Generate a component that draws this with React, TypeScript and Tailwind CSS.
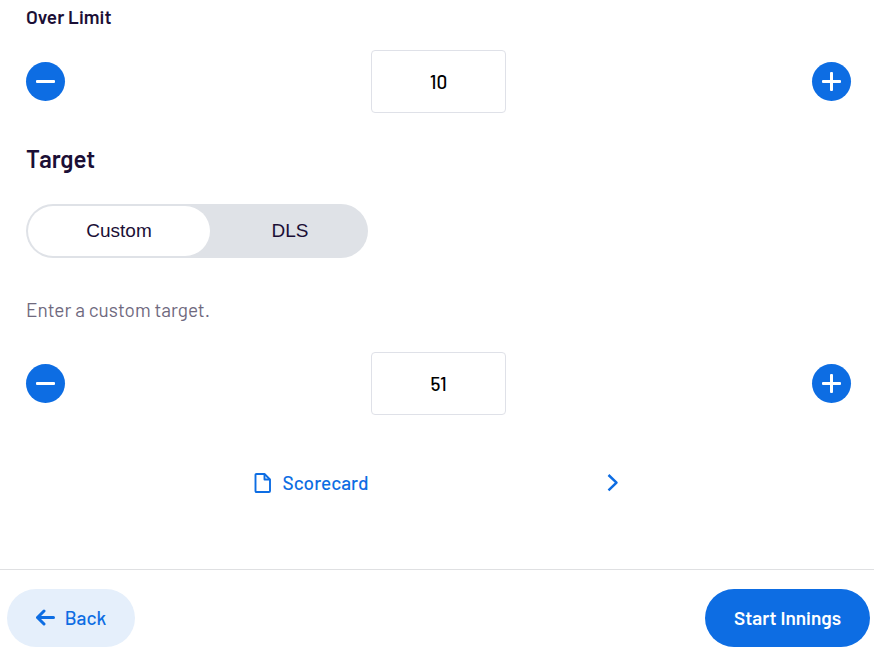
import React, { useState } from 'react';

interface StepperProps {
  id: string;
  label: string;
  value: number;
  onChange: (value: number) => void;
}

const roundButton =
  'flex size-[39px] shrink-0 items-center justify-center rounded-full bg-[#0d6de3] text-white';

const Stepper: React.FC<StepperProps> = ({ id, label, value, onChange }) => {
  return (
    <div className="flex items-center justify-between">
      <button
        type="button"
        aria-label={`Decrease ${label}`}
        className={roundButton}
        onClick={() => onChange(Math.max(0, value - 1))}
      >
        <svg className="size-[19px]" viewBox="0 0 19 19" fill="currentColor">
          <rect x="0" y="8" width="19" height="3" rx="1" />
        </svg>
      </button>
      <input
        id={id}
        aria-label={label}
        type="text"
        inputMode="numeric"
        value={value}
        onChange={(e) => onChange(Number(e.target.value) || 0)}
        className="h-[63px] w-[135px] rounded-[4px] border border-[#dfe1e8] bg-white text-center text-[19px] font-medium text-black"
      />
      <button
        type="button"
        aria-label={`Increase ${label}`}
        className={roundButton}
        onClick={() => onChange(value + 1)}
      >
        <svg className="size-[19px]" viewBox="0 0 19 19" fill="currentColor">
          <rect x="0" y="8" width="19" height="3" rx="1" />
          <rect x="8" y="0" width="3" height="19" rx="1" />
        </svg>
      </button>
    </div>
  );
};

const App: React.FC = () => {
  const [overs, setOvers] = useState(10);
  const [target, setTarget] = useState(51);
  const [mode, setMode] = useState('custom');

  return (
    <div className="bg-white font-['Barlow','Roboto',sans-serif] text-[#1b0f36]">
      <main className="flex flex-col pt-[5px] pr-[23px] pb-[72px] pl-[26px]">
        <label htmlFor="overs" className="mb-[21px] text-[19px] leading-6 font-semibold">
          Over Limit
        </label>
        <Stepper id="overs" label="Over Limit" value={overs} onChange={setOvers} />

        <h2 className="mt-[30px] mb-[29px] text-2xl leading-8 font-semibold">Target</h2>

        {/* Target type toggle */}
        <div className="flex h-[54px] self-start rounded-full bg-[#dfe2e7] p-0.5 font-['Liberation_Sans',sans-serif] text-[19px]">
          <button
            type="button"
            aria-pressed={mode === 'custom'}
            onClick={() => setMode('custom')}
            className={`w-[182px] rounded-full ${mode === 'custom' ? 'bg-white' : ''}`}
          >
            Custom
          </button>
          <button
            type="button"
            aria-pressed={mode === 'dls'}
            onClick={() => setMode('dls')}
            className={`w-[156px] rounded-full pl-1 ${mode === 'dls' ? 'bg-white' : ''}`}
          >
            DLS
          </button>
        </div>

        <p className="mt-[38px] mb-7 text-[19px] leading-7 text-[#6f697e]">
          Enter a custom target.
        </p>
        <Stepper id="target" label="Target" value={target} onChange={setTarget} />

        <a
          href="#scorecard"
          className="mt-[54px] flex w-[370px] items-center self-center text-[19px] leading-7 font-medium text-[#0d6de3]"
        >
          <svg
            className="mr-[11px] h-5 w-[18px]"
            viewBox="0 0 18 20"
            fill="none"
            stroke="currentColor"
            strokeWidth="1.9"
            strokeLinejoin="round"
          >
            <path d="M2.5 1H10.5L16 6.5V18Q16 19 15 19H2.5Q1.5 19 1.5 18V2Q1.5 1 2.5 1Z" />
            <path d="M10.5 1V6.5H16" />
          </svg>
          Scorecard
          <svg
            className="mr-[5px] ml-auto h-[18px] w-3"
            viewBox="0 0 12 18"
            fill="none"
            stroke="currentColor"
            strokeWidth="2.5"
            strokeLinejoin="round"
          >
            <path d="M1.5 1L9.5 8.7L1.5 16.4" />
          </svg>
        </a>
      </main>

      <footer className="flex items-center justify-between border-t border-[#dfe0e2] pt-[19px] pr-1 pb-[23px] pl-[7px] text-[19px] font-medium">
        <button
          type="button"
          className="flex h-[58px] w-32 items-center justify-center gap-[9px] rounded-full bg-[#e5effb] text-[#0d6de3]"
        >
          <svg
            className="h-[18px] w-5"
            viewBox="0 0 20 18"
            fill="none"
            stroke="currentColor"
            strokeWidth="3"
            strokeLinecap="round"
            strokeLinejoin="round"
          >
            <path d="M17.5 8.5H1.5M8 2L1.5 8.5L8 15" />
          </svg>
          Back
        </button>
        <button
          type="button"
          className="h-[58px] w-[165px] rounded-full bg-[#0d6de3] font-semibold text-white"
        >
          Start Innings
        </button>
      </footer>
    </div>
  );
};

export default App;
